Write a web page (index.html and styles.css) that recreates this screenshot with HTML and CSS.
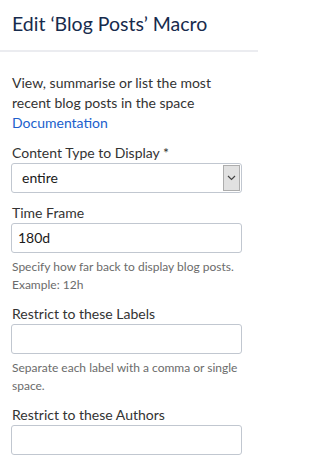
FILE: index.html
```html
<!DOCTYPE html>
<html>
<head>
<meta charset="utf-8">
<link rel="stylesheet" href="styles.css">
</head>
<body>
<div class="dialog">
  <header class="header">
    <h1 class="title">Edit ‘Blog Posts’ Macro</h1>
  </header>
  <div class="content">
    <p class="desc">View, summarise or list the most recent blog posts in the space <a class="link" href="#">Documentation</a></p>

    <div class="field">
      <label class="label">Content Type to Display *</label>
      <div class="select">
        <span class="select-value">entire</span>
        <span class="select-btn"><svg width="9" height="6" viewBox="0 0 9 6"><path d="M1 1l3.5 3.5L8 1" fill="none" stroke="#444" stroke-width="1.2"/></svg></span>
      </div>
    </div>

    <div class="field">
      <label class="label">Time Frame</label>
      <div class="input">180d</div>
      <p class="help">Specify how far back to display blog posts. Example: 12h</p>
    </div>

    <div class="field">
      <label class="label">Restrict to these Labels</label>
      <div class="input"></div>
      <p class="help">Separate each label with a comma or single space.</p>
    </div>

    <div class="field">
      <label class="label">Restrict to these Authors</label>
      <div class="input"></div>
    </div>
  </div>
</div>
</body>
</html>
```
FILE: styles.css
```css
html, body {
  margin: 0;
  padding: 0;
  background: #fff;
}
body {
  font-family: Lato, "Open Sans", sans-serif;
  color: #333333;
  width: 258px;
  overflow: hidden;
}
.header {
  height: 50px;
  border-bottom: 2px solid #ebecf0;
  display: flex;
  align-items: center;
  padding: 0 12px;
}
.title {
  margin: 0;
  font-size: 19.5px;
  font-weight: 400;
  color: #172b4d;
  line-height: 26px;
  white-space: nowrap;
  position: relative;
  top: -1px;
}
.content {
  padding: 21px 16px 0 11px;
}
.desc {
  margin: 0;
  font-size: 14px;
  line-height: 20px;
  padding-left: 1px;
}
.link {
  color: #205ecc;
  text-decoration: none;
}
.field {
  margin-top: 10px;
}
.label {
  display: block;
  font-size: 14px;
  line-height: 20px;
  padding-left: 1px;
}
.select {
  height: 30px;
  box-sizing: border-box;
  border: 1px solid #c1c7d0;
  border-radius: 3px;
  display: flex;
  align-items: stretch;
}
.select-value {
  flex: 1;
  font-size: 14px;
  line-height: 28px;
  padding-left: 10px;
  color: #1a1a1a;
}
.select-btn {
  width: 17px;
  background: #e1e1e1;
  display: flex;
  align-items: center;
  justify-content: center;
  margin: 1px;
  border: 1px solid #adadad;
  box-sizing: border-box;
}
.input {
  height: 30px;
  box-sizing: border-box;
  border: 1px solid #c1c7d0;
  border-radius: 3px;
  font-size: 14px;
  line-height: 28px;
  padding-left: 6px;
  color: #1a1a1a;
}
.help {
  margin: 5px 0 0;
  font-size: 12px;
  line-height: 18px;
  color: #6b6b6b;
  padding-left: 1px;
}
```
